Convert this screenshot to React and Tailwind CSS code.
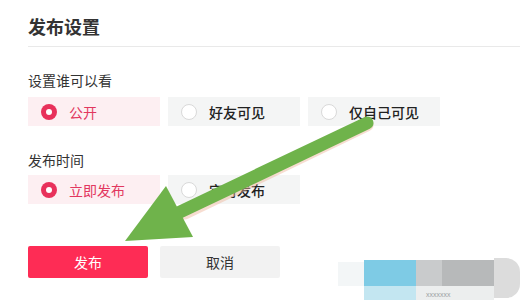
import React from "react";

const font = { fontFamily: '"Noto Sans CJK SC", "Noto Sans", sans-serif' };

function Radio({ checked }) {
  return checked ? (
    <span className="flex h-[16px] w-[16px] shrink-0 items-center justify-center rounded-full bg-[#e8315b]">
      <span className="h-[6px] w-[6px] rounded-full bg-white" />
    </span>
  ) : (
    <span className="h-[16px] w-[16px] shrink-0 rounded-full border-[1.5px] border-[#d9d9d9] bg-white" />
  );
}

function Option({ label, checked }) {
  return (
    <div
      className={
        "flex h-[29px] w-[132px] items-center gap-[12px] pl-[13px] " +
        (checked ? "bg-[#fdeff2]" : "bg-[#f4f5f5]")
      }
    >
      <Radio checked={checked} />
      <span
        className={
          "text-[14px] leading-[20px] " +
          (checked ? "text-[#e2375f]" : "font-medium text-[#222]")
        }
      >
        {label}
      </span>
    </div>
  );
}

export default function App() {
  return (
    <div className="relative h-[304px] w-[520px] overflow-hidden bg-white" style={font}>
      <div className="flex flex-col pl-[28px] pt-[15px]">
        <h1 className="text-[18px] font-bold leading-[22px] text-[#333]">发布设置</h1>
        <div className="mt-[9px] h-px bg-[#e9e9e9]" />

        <div className="mt-[24px] text-[14px] leading-[18px] text-[#333]">设置谁可以看</div>
        <div className="mt-[8px] flex gap-[8px]">
          <Option label="公开" checked />
          <Option label="好友可见" />
          <Option label="仅自己可见" />
        </div>

        <div className="mt-[25px] text-[14px] leading-[18px] text-[#333]">发布时间</div>
        <div className="mt-[6px] flex gap-[8px]">
          <Option label="立即发布" checked />
          <Option label="定时发布" />
        </div>

        <div className="mt-[42px] flex gap-[12px]">
          <button className="flex h-[32px] w-[120px] items-center justify-center rounded-[2px] bg-[#fe2c55] text-[14px] text-white">
            发布
          </button>
          <button className="flex h-[32px] w-[120px] items-center justify-center rounded-[2px] bg-[#f2f2f2] text-[14px] text-[#333]">
            取消
          </button>
        </div>
      </div>

      {/* watermark blocks */}
      <div className="absolute left-[338px] top-[262px] h-[24px] w-[26px] bg-[#f3f6f7]" />
      <div className="absolute left-[364px] top-[260px] h-[26px] w-[52px] bg-[#7ecbe5]" />
      <div className="absolute left-[364px] top-[286px] h-[14px] w-[52px] bg-[#c3e6f1]" />
      <div className="absolute left-[416px] top-[260px] h-[26px] w-[26px] bg-[#c9cbcc]" />
      <div className="absolute left-[442px] top-[260px] h-[26px] w-[52px] bg-[#b7b9ba]" />
      <div className="absolute left-[416px] top-[286px] h-[14px] w-[78px] bg-[#eceeee]" />
      <div className="absolute left-[494px] top-[258px] h-[40px] w-[26px] rounded-r-[14px] bg-[#dcdcdc]" />
      <div className="absolute left-[426px] top-[290px] text-[7px] leading-[8px] text-[#9aa0a3]">xxxxxxx</div>

      {/* green arrow */}
      <svg className="pointer-events-none absolute inset-0" width="520" height="304" viewBox="0 0 520 304">
        <line x1="367" y1="125" x2="185" y2="213" stroke="#efb59a" strokeWidth="13" strokeLinecap="round" opacity="0.45" />
        <line x1="367" y1="123" x2="180" y2="212" stroke="#6fb34b" strokeWidth="13" strokeLinecap="round" />
        <polygon points="125,241 166,186 193,237" fill="#6fb34b" />
      </svg>
    </div>
  );
}
